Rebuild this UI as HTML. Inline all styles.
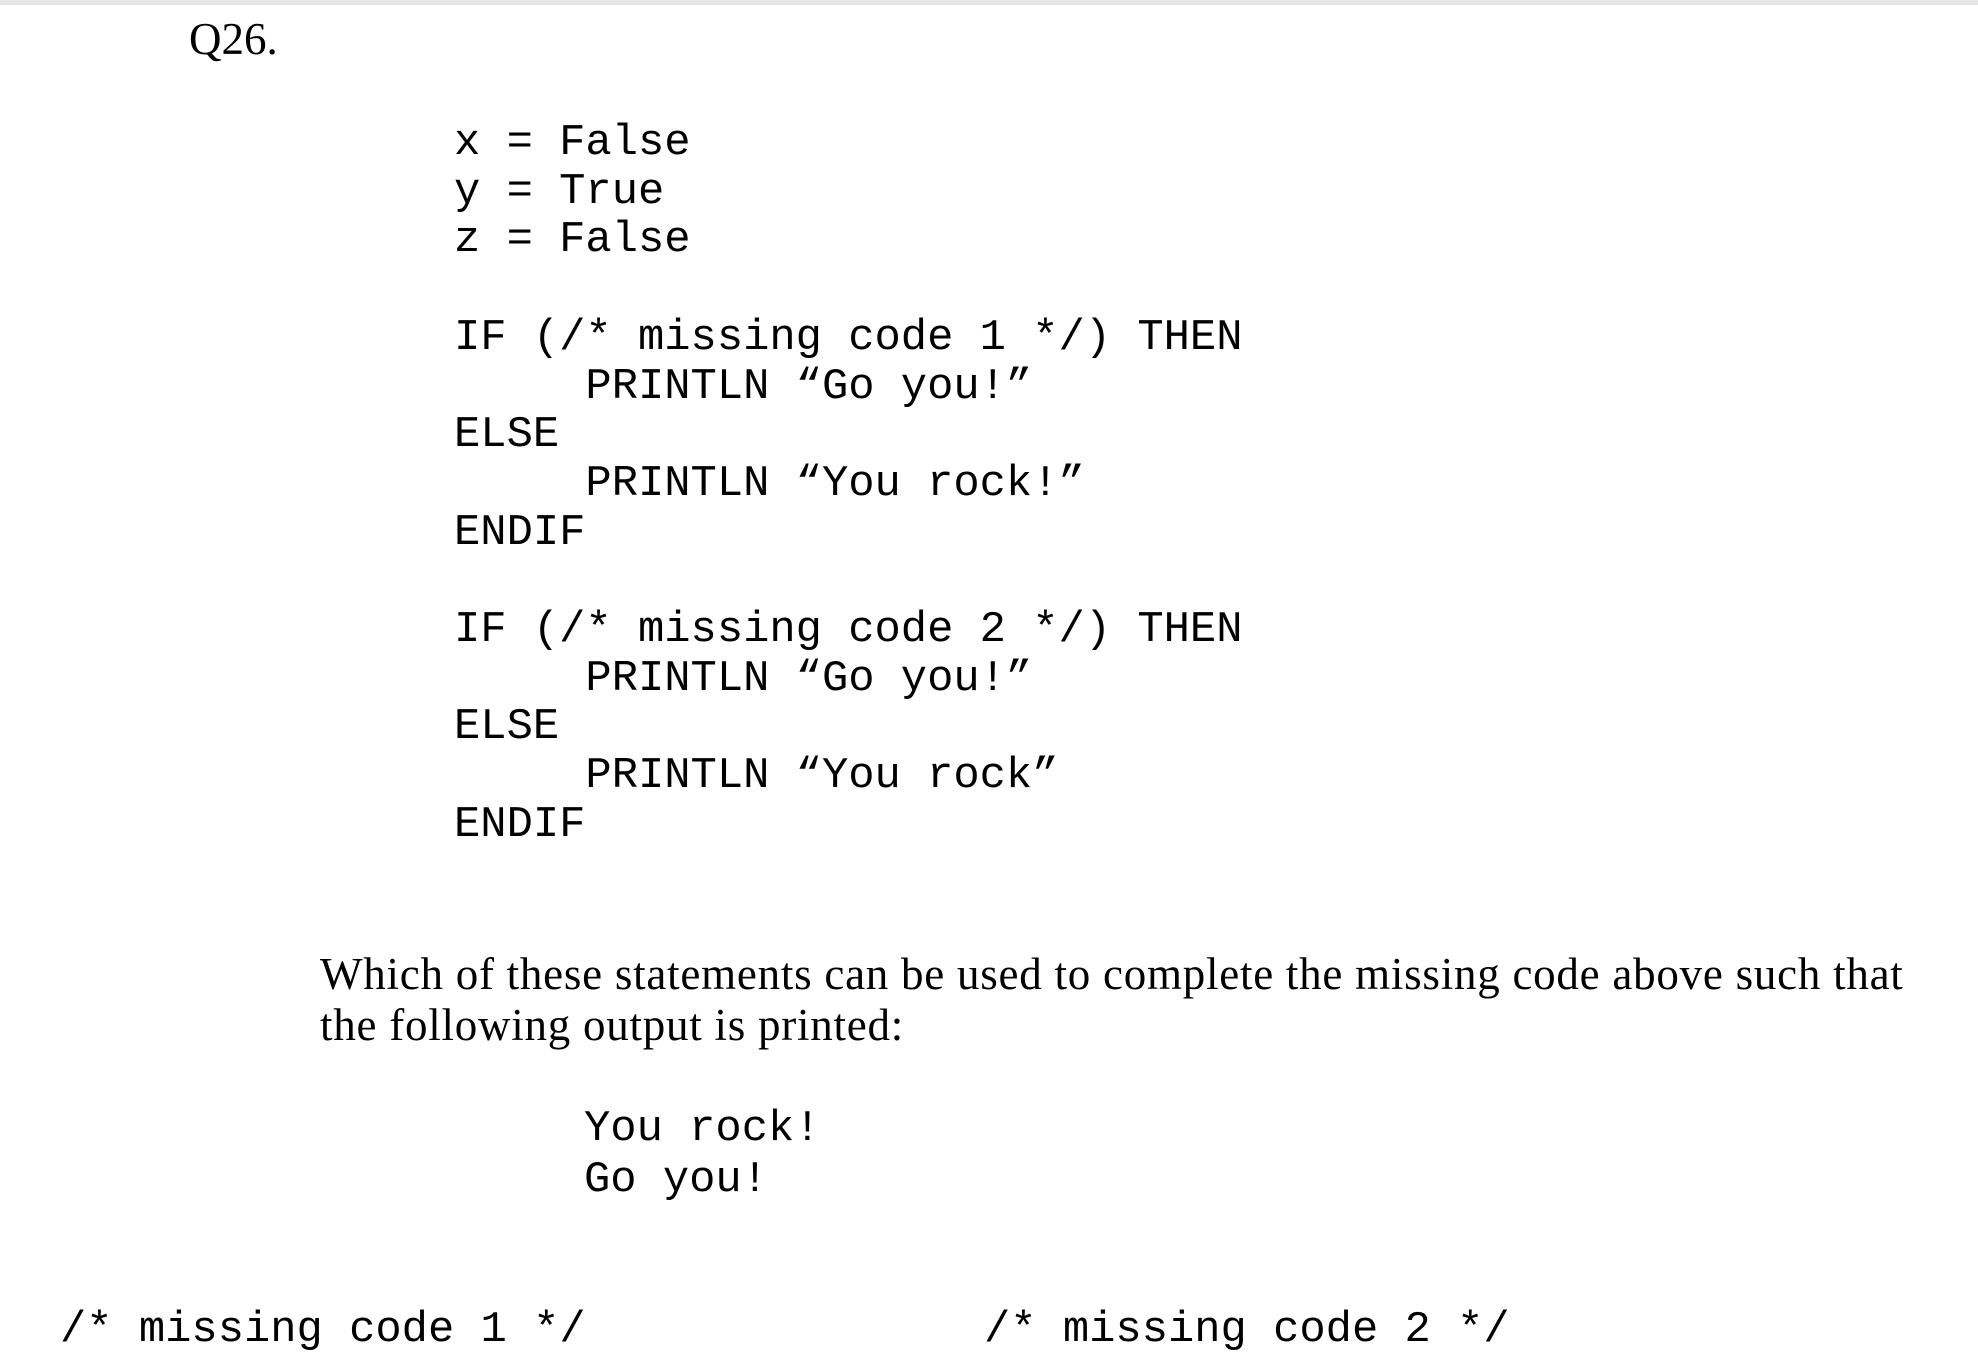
<!DOCTYPE html>
<html><head><meta charset="utf-8"><style>
html,body{margin:0;padding:0;background:#fff;}
body{width:1978px;height:1354px;position:relative;overflow:hidden;color:#000;}
.bar{position:absolute;left:0;top:0;width:1978px;height:5px;background:#e6e6e6;}
.serif{position:absolute;font-family:"Liberation Serif",serif;font-size:45px;line-height:50px;white-space:nowrap;}
pre{position:absolute;margin:0;font-family:"Liberation Mono",monospace;font-size:43.8px;line-height:48.7px;}
</style></head><body>
<div class="bar"></div>
<div class="serif" style="left:189px;top:14px;">Q26.</div>
<pre style="left:454px;top:120px;">x = False
y = True
z = False

IF (/* missing code 1 */) THEN
     PRINTLN “Go you!”
ELSE
     PRINTLN “You rock!”
ENDIF

IF (/* missing code 2 */) THEN
     PRINTLN “Go you!”
ELSE
     PRINTLN “You rock”
ENDIF</pre>
<div class="serif" style="left:320px;top:949px;letter-spacing:0.75px;line-height:51px;">Which of these statements can be used to complete the missing code above such that<br>the following output is printed:</div>
<pre style="left:584px;top:1105px;line-height:50.5px;">You rock!
Go you!</pre>
<pre style="left:60px;top:1307px;">/* missing code 1 */</pre>
<pre style="left:984px;top:1307px;">/* missing code 2 */</pre>
</body></html>
